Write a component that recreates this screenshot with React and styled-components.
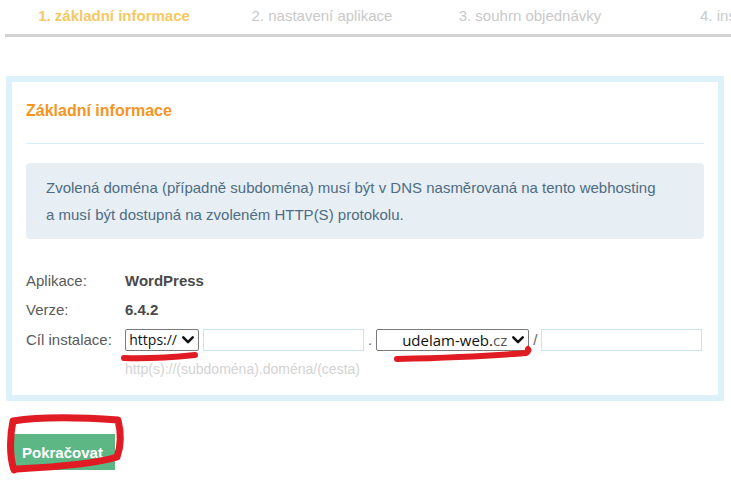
import React from "react";
import styled, { createGlobalStyle } from "styled-components";

const Global = createGlobalStyle`
  html, body { margin: 0; padding: 0; background: #ffffff; }
  body { font-family: "Liberation Sans", Arial, sans-serif; width: 731px; height: 480px; overflow: hidden; }
  #root { position: relative; width: 731px; height: 480px; }
`;

const Page = styled.div`
  position: relative;
  width: 731px;
  height: 480px;
`;

const Tabs = styled.div`
  display: flex;
  flex-wrap: nowrap;
  overflow: hidden;
  margin-left: 5px;
  border-bottom: 3px solid #d2d2d2;
  height: 34px;
`;

const Tab = styled.div`
  flex: 0 0 208px;
  box-sizing: border-box;
  padding: 6px 0 0 10px;
  height: 37px;
  border-bottom: 3px solid ${(p) => (p.$active ? "#f5c95c" : "transparent")};
  text-align: center;
  white-space: nowrap;
  font-size: 15px;
  line-height: 20px;
  font-weight: ${(p) => (p.$active ? 700 : 400)};
  color: ${(p) => (p.$active ? "#f4c863" : "#c9c9c9")};
`;

const Panel = styled.section`
  margin: 39px 7px 0 6px;
  border: 6px solid #ddf1fb;
  padding: 0 14px 16px;
`;

const Heading = styled.h2`
  margin: 0;
  padding: 19px 0 22px;
  font-size: 16px;
  line-height: 20px;
  font-weight: 700;
  color: #f7941d;
  border-bottom: 1px solid #d9eef8;
`;

const Info = styled.div`
  margin-top: 19px;
  background: #e7eff4;
  border-radius: 4px;
  padding: 11px 20px;
  font-size: 15px;
  line-height: 27px;
  color: #4e6c82;
`;

const Rows = styled.div`
  margin-top: 32px;
  display: flex;
  flex-direction: column;
  gap: 9px;
`;

const Row = styled.div`
  display: flex;
  align-items: center;
  min-height: 20px;
  font-size: 15px;
  line-height: 20px;
`;

const Label = styled.div`
  flex: 0 0 99px;
  color: #5a5a5a;
`;

const Value = styled.div`
  font-weight: 700;
  color: #4a4a4a;
`;

const Controls = styled.div`
  display: flex;
  align-items: center;
  gap: 4px;
`;

const SelectBox = styled.div`
  box-sizing: border-box;
  width: ${(p) => p.$w}px;
  height: 22px;
  border: 1px solid #7a7a7a;
  border-radius: 2px;
  background: #fff;
  display: flex;
  align-items: center;
  justify-content: flex-end;
  gap: 5px;
  padding: 0 4px 0 0;
  font-family: "Open Sans", "Noto Sans", sans-serif;
  font-size: ${(p) => p.$fs || 15}px;
  line-height: 20px;
  color: #111;
  white-space: nowrap;
  overflow: hidden;

  svg { flex-shrink: 0; }
`;

const Dim = styled.span`
  color: #555;
`;

const TextInput = styled.input`
  box-sizing: border-box;
  width: 161px;
  height: 22px;
  border: 1px solid #c9e3ef;
  border-radius: 0;
  padding: 0 4px;
  margin: 0;
  outline: none;
  background: #fff;
`;

const Sep = styled.span`
  color: #666;
  font-size: 15px;
`;

const Hint = styled.div`
  margin: 8px 0 0 99px;
  font-size: 14px;
  line-height: 20px;
  color: #d3d3d3;
`;

const Button = styled.button`
  margin: 33px 0 0 13px;
  border: none;
  border-radius: 0;
  background: #5cb784;
  color: #ffffff;
  font-family: "Liberation Sans", Arial, sans-serif;
  font-size: 15px;
  font-weight: 700;
  height: 36px;
  padding: 0 12px 0 9px;
  cursor: pointer;
`;

const Marks = styled.svg`
  position: absolute;
  left: 0;
  top: 0;
  pointer-events: none;
`;

const Chevron = () => (
  <svg width="12" height="8" viewBox="0 0 12 8">
    <path d="M1.3 1.4 L6 6.2 L10.7 1.4" fill="none" stroke="#111" strokeWidth="2.5" strokeLinecap="round" strokeLinejoin="round" />
  </svg>
);

export default function App() {
  return (
    <Page>
      <Global />
      <Tabs>
        <Tab $active>1. základní informace</Tab>
        <Tab>2. nastavení aplikace</Tab>
        <Tab>3. souhrn objednávky</Tab>
        <Tab>4. instalace</Tab>
      </Tabs>
      <Panel>
        <Heading>Základní informace</Heading>
        <Info>
          Zvolená doména (případně subdoména) musí být v DNS nasměrovaná na tento webhosting
          <br />
          a musí být dostupná na zvoleném HTTP(S) protokolu.
        </Info>
        <Rows>
          <Row>
            <Label>Aplikace:</Label>
            <Value>WordPress</Value>
          </Row>
          <Row>
            <Label>Verze:</Label>
            <Value>6.4.2</Value>
          </Row>
          <Row>
            <Label>Cíl instalace:</Label>
            <Controls>
              <SelectBox $w={74} $fs={14}>
                <span>https://</span>
                <Chevron />
              </SelectBox>
              <TextInput type="text" />
              <Sep>.</Sep>
              <SelectBox $w={153}>
                <span>
                  udelam-web.<Dim>cz</Dim>
                </span>
                <Chevron />
              </SelectBox>
              <Sep>/</Sep>
              <TextInput type="text" />
            </Controls>
          </Row>
        </Rows>
        <Hint>http(s)://(subdoména).doména/(cesta)</Hint>
      </Panel>
      <Button>Pokračovat</Button>
      <Marks width="731" height="480" viewBox="0 0 731 480">
        <g fill="none" stroke="#e01b24" strokeLinecap="round" strokeLinejoin="round">
          <path d="M124 358 C 150 359, 175 357, 195 355" strokeWidth="6" />
          <path d="M397 359 C 440 358, 490 356, 526 353 C 528 352, 529 350, 528 349" strokeWidth="6" />
          <path d="M14 470 C 9 455, 10 435, 13 421 C 45 416, 90 418, 118 420 C 121 432, 121 446, 117 457 C 95 464, 55 467, 17 469" strokeWidth="7" />
        </g>
      </Marks>
    </Page>
  );
}
